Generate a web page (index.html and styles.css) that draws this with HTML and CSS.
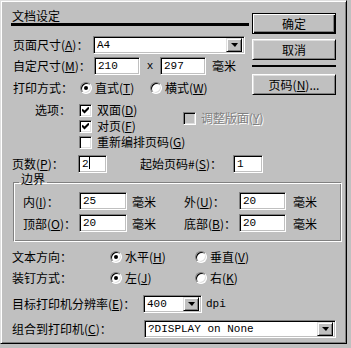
FILE: index.html
```html
<!DOCTYPE html>
<html lang="zh">

<head>
    <meta charset="UTF-8">
    <title>文档设定</title>
    <link rel="stylesheet" href="styles.css">
</head>

<body>

    <div class="dialog">
        <div class="top">
            <div class="main">
                <div class="title">文档设定</div>

                <div class="row r-page">
                    <span class="label w-page">页面尺寸(<u>A</u>)：</span>
                    <div class="field select sel-page"><span class="value">A4</span><span class="arrow"></span></div>
                </div>

                <div class="row r-custom">
                    <span class="label w-custom">自定尺寸(<u>M</u>)：</span>
                    <div class="field f-dim"><span class="value">210</span></div>
                    <span class="times">x</span>
                    <div class="field f-dim"><span class="value">297</span></div>
                    <span class="unit">毫米</span>
                </div>

                <div class="row r-orient">
                    <span class="label w-orient">打印方式：</span>
                    <span class="radio on w-radio1"><span class="dot"></span>直式(<u>T</u>)</span>
                    <span class="radio"><span class="dot"></span>横式(<u>W</u>)</span>
                </div>

                <div class="options">
                    <span class="label w-opt">选项：</span>
                    <div class="checks">
                        <span class="check on"><span class="box"><svg width="7" height="7" viewBox="0 0 7 7"><path d="M0 2.5 L2.5 5 L7 0.5" fill="none" stroke="#000" stroke-width="2"/></svg></span>双面(<u>D</u>)</span>
                        <span class="check on"><span class="box"><svg width="7" height="7" viewBox="0 0 7 7"><path d="M0 2.5 L2.5 5 L7 0.5" fill="none" stroke="#000" stroke-width="2"/></svg></span>对页(<u>F</u>)</span>
                        <span class="check"><span class="box"></span>重新编排页码(<u>G</u>)</span>
                    </div>
                    <span class="check disabled adjust"><span class="box"></span>调整版面(<u>Y</u>)</span>
                </div>

                <div class="row r-pages">
                    <span class="label w-pages">页数(<u>P</u>)：</span>
                    <div class="field f-pages"><span class="value">2<span class="caret"></span></span></div>
                    <span class="label w-start">起始页码#(<u>S</u>)：</span>
                    <div class="field f-start"><span class="value">1</span></div>
                </div>
            </div>

            <div class="side">
                <div class="btn default">确定</div>
                <div class="btn">取消</div>
                <div class="sep"></div>
                <div class="btn">页码(<u>N</u>)...</div>
            </div>
        </div>

        <fieldset class="margins">
            <legend>边界</legend>
            <div class="mrow">
                <span class="label w-in">内(<u>I</u>)：</span>
                <div class="field f-margin"><span class="value">25</span></div>
                <span class="unit w-unit">毫米</span>
                <span class="label w-out">外(<u>U</u>)：</span>
                <div class="field f-margin2"><span class="value">20</span></div>
                <span class="unit u-right">毫米</span>
            </div>
            <div class="mrow">
                <span class="label w-in">顶部(<u>O</u>)：</span>
                <div class="field f-margin"><span class="value">20</span></div>
                <span class="unit w-unit">毫米</span>
                <span class="label w-out">底部(<u>B</u>)：</span>
                <div class="field f-margin2"><span class="value">20</span></div>
                <span class="unit u-right">毫米</span>
            </div>
        </fieldset>

        <div class="bottom">
            <div class="row r-dir">
                <span class="label w-dir">文本方向：</span>
                <span class="radio on w-radio2"><span class="dot"></span>水平(<u>H</u>)</span>
                <span class="radio"><span class="dot"></span>垂直(<u>V</u>)</span>
            </div>
            <div class="row r-bind">
                <span class="label w-dir">装钉方式：</span>
                <span class="radio on w-radio2"><span class="dot"></span>左(<u>J</u>)</span>
                <span class="radio"><span class="dot"></span>右(<u>K</u>)</span>
            </div>
            <div class="row r-res">
                <span class="label w-res">目标打印机分辨率(<u>E</u>)：</span>
                <div class="field select sel-res"><span class="value">400</span><span class="arrow"></span></div>
                <span class="unit dpi">dpi</span>
            </div>
            <div class="row r-printer">
                <span class="label w-printer">组合到打印机(<u>C</u>)：</span>
                <div class="field select sel-printer"><span class="value">?DISPLAY on None</span><span class="arrow"></span></div>
            </div>
        </div>
    </div>

</body>

</html>
```

FILE: styles.css
```css
body {
    margin: 0;
    background-color: #c0c0c0;
    font-family: "Noto Sans CJK SC", "Liberation Sans", sans-serif;
    font-size: 12px;
    color: #000;
}

u {
    text-decoration: underline;
}

.dialog {
    width: 347px;
    height: 344px;
    box-sizing: border-box;
    padding: 8px 10px 0 10px;
    border: 1px solid;
    border-color: #dfdfdf #000 #000 #dfdfdf;
    box-shadow: inset 1px 1px #fff, inset -1px -1px #808080;
    background-color: #c0c0c0;
}

/* top part: form on the left, buttons on the right */

.top {
    display: flex;
}

.main {
    width: 238px;
}

.title {
    height: 14px;
    line-height: 14px;
    padding-left: 1px;
    border-bottom: 3px solid #000;
}

.row {
    display: flex;
    align-items: center;
    height: 16px;
    line-height: 16px;
    white-space: nowrap;
}

.label {
    flex: none;
}

.r-page {
    height: 18px;
    margin-top: 10px;
    padding-left: 2px;
}

.r-custom {
    height: 18px;
    margin-top: 3px;
    padding-left: 2px;
}

.r-orient {
    margin-top: 5px;
    padding-left: 2px;
}

.r-pages {
    height: 18px;
    margin-top: 5px;
    padding-left: 1px;
}

.w-page { width: 80px; }
.w-custom { width: 81px; }
.w-orient { width: 67px; }
.w-pages { width: 66px; }
.w-start { width: 93px; margin-left: 33px; }

/* sunken fields */

.field {
    box-sizing: border-box;
    height: 18px;
    background-color: #fff;
    border: 1px solid;
    border-color: #808080 #fff #fff #808080;
    box-shadow: inset 1px 1px #000, inset -1px -1px #c0c0c0;
    display: flex;
    align-items: center;
    padding-left: 3px;
    font-family: "Liberation Mono", monospace;
    font-size: 11px;
    flex: none;
}

.value {
    flex: 1;
    line-height: 14px;
    white-space: nowrap;
    overflow: hidden;
}

.caret {
    display: inline-block;
    width: 1px;
    height: 12px;
    background-color: #000;
    vertical-align: -2px;
}

.select {
    padding-right: 2px;
}

.arrow {
    box-sizing: border-box;
    width: 16px;
    height: 14px;
    flex: none;
    background-color: #c0c0c0;
    border: 1px solid;
    border-color: #dfdfdf #000 #000 #dfdfdf;
    box-shadow: inset 1px 1px #fff, inset -1px -1px #808080;
    display: flex;
    align-items: center;
    justify-content: center;
}

.arrow::after {
    content: "";
    width: 0;
    height: 0;
    border-left: 4px solid transparent;
    border-right: 3px solid transparent;
    border-top: 4px solid #000;
}

.sel-page { width: 152px; }
.f-dim { width: 46px; }
.f-pages { width: 29px; }
.f-start { width: 30px; }

.times {
    width: 20px;
    text-align: center;
    font-family: "Liberation Mono", monospace;
    font-size: 11px;
}

.unit {
    margin-left: 6px;
}

/* radios and checks */

.radio,
.check {
    display: inline-flex;
    align-items: center;
    white-space: nowrap;
}

.radio .dot {
    box-sizing: border-box;
    width: 12px;
    height: 12px;
    margin-right: 3px;
    border-radius: 50%;
    background-color: #fff;
    border: 1px solid;
    border-color: #808080 #fff #fff #808080;
    box-shadow: inset 1px 1px #000, inset -1px -1px #dfdfdf;
    display: flex;
    align-items: center;
    justify-content: center;
}

.radio.on .dot::after {
    content: "";
    width: 4px;
    height: 4px;
    border-radius: 50%;
    background-color: #000;
}

.w-radio1 { width: 70px; }
.w-radio2 { width: 85px; }

.check .box {
    box-sizing: border-box;
    width: 13px;
    height: 13px;
    margin-right: 5px;
    background-color: #fff;
    border: 1px solid;
    border-color: #808080 #fff #fff #808080;
    box-shadow: inset 1px 1px #000, inset -1px -1px #dfdfdf;
    display: flex;
    align-items: center;
    justify-content: center;
    flex: none;
}

.check.disabled {
    color: #808080;
    text-shadow: 1px 1px #fff;
}

.check.disabled .box {
    background-color: #c0c0c0;
}

.options {
    display: flex;
    margin-top: 6px;
    padding-left: 24px;
    line-height: 16px;
}

.w-opt {
    width: 44px;
    height: 16px;
}

.checks {
    width: 104px;
    display: flex;
    flex-direction: column;
}

.checks .check {
    height: 16px;
}

.adjust {
    height: 16px;
    margin-top: 8px;
    align-self: flex-start;
}

/* buttons */

.side {
    width: 85px;
    margin-left: 3px;
    padding-top: 4px;
}

.btn {
    box-sizing: border-box;
    height: 21px;
    line-height: 19px;
    text-align: center;
    background-color: #c0c0c0;
    border: 1px solid;
    border-color: #fff #000 #000 #fff;
    box-shadow: inset 1px 1px #dfdfdf, inset -1px -1px #808080;
    margin-bottom: 5px;
    white-space: nowrap;
}

.btn.default {
    border-color: #000;
    box-shadow: inset 1px 1px #fff, inset -1px -1px #000, inset -2px -2px #808080;
}

.sep {
    height: 2px;
    background-color: #000;
    margin: 1px 0 7px 0;
}

/* margins group: etched frame */

.margins {
    width: 329px;
    box-sizing: border-box;
    margin: 0 0 0 2px;
    padding: 1px 1px 9px 1px;
    border: 1px solid;
    border-color: #808080 #fff #fff #808080;
    box-shadow: inset 1px 1px #fff, inset -1px -1px #808080;
}

.margins legend {
    margin-left: 4px;
    padding: 0 2px 6px 2px;
    line-height: 12px;
}

.mrow {
    display: flex;
    align-items: center;
    height: 18px;
    padding-left: 8px;
    white-space: nowrap;
}

.mrow + .mrow {
    margin-top: 4px;
}

.w-in { width: 56px; }
.f-margin { width: 48px; }
.w-unit { width: 52px; margin-left: 5px; }
.w-out { width: 55px; }
.f-margin2 { width: 47px; }
.u-right { margin-left: 7px; }

/* bottom rows */

.bottom {
    padding-left: 1px;
}

.r-dir { margin-top: 7px; }
.r-bind { margin-top: 5px; }

.r-res {
    height: 18px;
    margin-top: 9px;
}

.r-printer {
    height: 18px;
    margin-top: 7px;
}

.w-dir { width: 98px; }
.w-res { width: 131px; }
.w-printer { width: 132px; }

.sel-res { width: 59px; }
.sel-printer { width: 192px; }

.dpi {
    margin-left: 4px;
    font-family: "Liberation Mono", monospace;
    font-size: 11px;
}
```
